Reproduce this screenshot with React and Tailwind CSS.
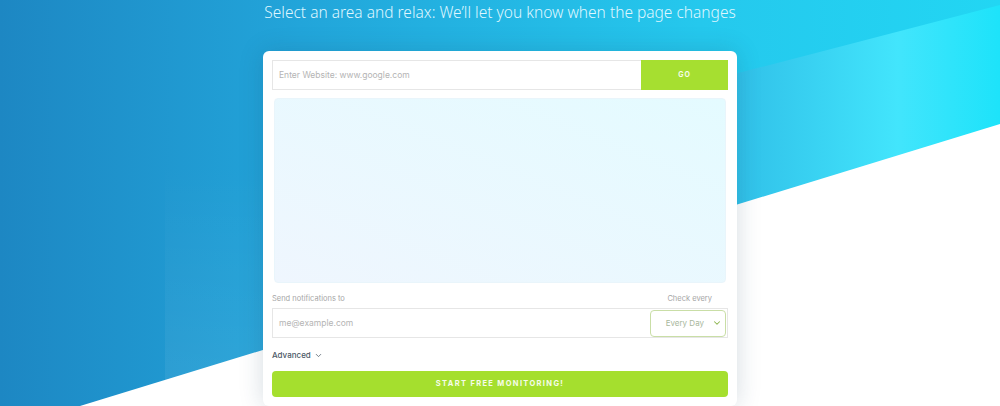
import { ChevronDown } from "lucide-react";

function Backdrop() {
  return (
    <svg
      className="absolute inset-0 h-full w-full"
      viewBox="0 0 1000 406"
      preserveAspectRatio="none"
    >
      <defs>
        <linearGradient id="base" x1="0" y1="0" x2="1" y2="0">
          <stop offset="0" stopColor="#1d87c3" />
          <stop offset="0.3" stopColor="#22a5da" />
          <stop offset="0.7" stopColor="#25c8ed" />
          <stop offset="1" stopColor="#22d6f3" />
        </linearGradient>
        <linearGradient id="veil" x1="0" y1="0" x2="0" y2="1">
          <stop offset="0.4" stopColor="#ffffff" stopOpacity="0" />
          <stop offset="1" stopColor="#ffffff" stopOpacity="0.07" />
        </linearGradient>
        <linearGradient id="band" x1="400" y1="0" x2="1000" y2="0" gradientUnits="userSpaceOnUse">
          <stop offset="0" stopColor="#2ab4e2" stopOpacity="0" />
          <stop offset="0.55" stopColor="#30bfe8" />
          <stop offset="0.83" stopColor="#42e5fc" />
          <stop offset="1" stopColor="#1de3fa" />
        </linearGradient>
      </defs>
      <rect x="0" y="0" width="1000" height="406" fill="url(#base)" />
      <polygon points="165,0 1000,0 1000,406 165,406" fill="url(#veil)" />
      <polygon points="400,161 1000,5 1000,406 400,406" fill="url(#band)" />
      <polygon points="80,406 1000,124 1000,406" fill="#ffffff" />
    </svg>
  );
}

export default function App() {
  return (
    <div
      className="relative h-[406px] w-[1000px] overflow-hidden"
      style={{ fontFamily: "Inter, 'Noto Sans', sans-serif" }}
    >
      <Backdrop />

      <div className="relative z-10 flex flex-col items-center">
        <h1
          className="h-6 text-[15.5px] font-light leading-6 text-[#dff6ff]"
          style={{ fontFamily: "'Noto Sans', sans-serif" }}
        >
          Select an area and relax: We’ll let you know when the page changes
        </h1>

        <div className="mt-[27px] w-[474px] rounded-md bg-white p-[9px] shadow-[0_0_24px_rgba(20,60,90,0.18)]">
          {/* URL ROW */}
          <div className="flex h-[30px]">
            <div className="flex flex-1 items-center border border-r-0 border-[#e6e6e6] px-[6px] text-[8.5px] text-[#b4b4b4]">
              Enter Website: www.google.com
            </div>
            <button className="w-[87px] bg-[#a6df30] text-[7px] font-bold tracking-[0.15em] text-white/90">
              GO
            </button>
          </div>

          {/* PREVIEW */}
          <div className="mx-[2px] mt-[8px] h-[185px] rounded-sm border border-[#e9f5fb] bg-gradient-to-bl from-[#e4fbff] to-[#eff6fe]" />

          {/* LABELS */}
          <div className="mt-[11px] flex h-[10px] items-center justify-between text-[7.5px] text-[#a6a6a6]">
            <span>Send notifications to</span>
            <span className="mr-[16px]">Check every</span>
          </div>

          {/* EMAIL ROW */}
          <div className="mt-[4px] flex h-[30px] items-center border border-[#e6e6e6]">
            <div className="flex-1 px-[6px] text-[8.5px] text-[#b4b4b4]">me@example.com</div>
            <div className="mr-[1px] flex h-[27px] w-[76px] items-center justify-end gap-[8px] rounded-sm border border-[#c9dea6] pr-[3px] text-[8px] text-[#a9b79c]">
              <span>Every Day</span>
              <ChevronDown className="h-[10px] w-[10px] text-[#8cb44c]" strokeWidth={2.5} />
            </div>
          </div>

          {/* ADVANCED */}
          <div className="mt-[12px] flex h-[10px] items-center gap-[3px] text-[8px] font-medium text-[#4b5866]">
            <span>Advanced</span>
            <ChevronDown className="h-[9px] w-[9px]" strokeWidth={2} />
          </div>

          {/* CTA */}
          <button className="mt-[11px] h-[26px] w-full rounded-sm bg-[#a5df2e] text-[7.5px] font-bold tracking-[0.18em] text-white/90">
            START FREE MONITORING!
          </button>
        </div>
      </div>
    </div>
  );
}
